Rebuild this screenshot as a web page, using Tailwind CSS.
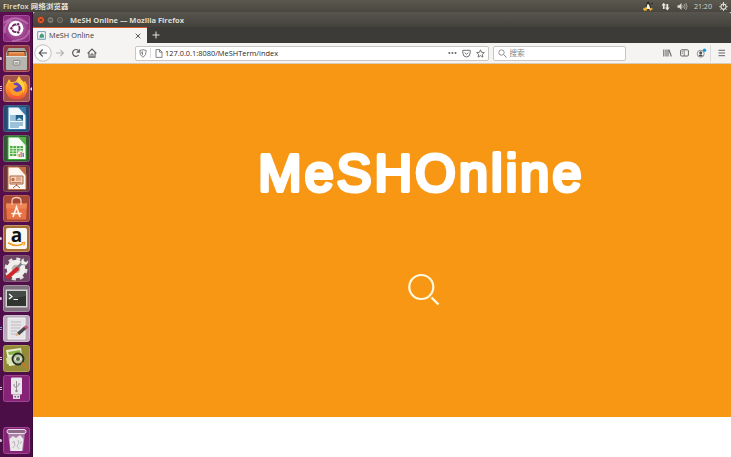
<!DOCTYPE html>
<html lang="zh">
<head>
<meta charset="utf-8">
<title>MeSH Online</title>
<script src="https://cdn.jsdelivr.net/npm/@tailwindcss/browser@4"></script>
</head>
<body class="w-[731px] h-[457px] overflow-hidden flex flex-col font-['Open_Sans','Noto_Sans_CJK_SC',sans-serif] text-[7.5px] leading-none">
<header class="h-3 shrink-0 bg-linear-to-b from-[#5b594f] to-[#48463e] flex items-center justify-between pl-[3px] pr-[3px] text-[#e5e2d9]">
  <svg class="w-[70px] h-[12px]" viewBox="0 0 70 12"><text x="0" y="8.800" font-family="Open Sans, Noto Sans CJK SC, sans-serif" font-weight="600" font-size="7.400" textLength="65.500" fill="#e5e2d9">Firefox 网络浏览器</text></svg>
  <div class="flex items-center">
    <svg class="w-[11px] h-[10px] mr-[7px]" viewBox="0 0 11 10"><path d="M4 1.500Q5.500-.5 6.500 2L8 6 7 9H3L2.500 6Z" fill="#292923"/><path d="M4.500 3 6 3.500 7.300 8H3Z" fill="#f5f2df"/><path d="M0 8 3 6.500 4 9 1.500 9.500ZM6.500 8 8 7l1.500 1L7 9.500Z" fill="#f6b331" stroke="#f6b331" stroke-width=".6"/><path d="m8 3 2-1" stroke="#222"/></svg>
    <svg class="w-[9px] h-[9px] mr-[7px]" viewBox="0 0 9 9" fill="#ece9df"><path d="M.5 3.500 2.700.8 5 3.500H3.600V7H1.900V3.500ZM4 5.500h1.400V2h1.800v3.500h1.400L6.300 8.400Z"/></svg>
    <svg class="w-[11px] h-[9px] mr-[6px]" viewBox="0 0 11 9" fill="none" stroke="#dedbd2"><path d="M.5 3.200h1.700L4.500 1v7L2.200 5.800H.5Z" fill="#dedbd2" stroke="none"/><path d="M5.700 3q1 1.500 0 3M7.200 2q1.800 2.500 0 5M8.800 1q2.400 3.500 0 7" stroke-width=".8" opacity=".75"/></svg>
    <svg class="w-[20px] h-[12px] mr-[5px]" viewBox="0 0 20 12"><text x="0" y="8.800" font-family="Open Sans" font-size="7.200" textLength="18" fill="#d6d3ca">21:20</text></svg>
    <svg class="w-[9px] h-[9px]" viewBox="0 0 9 9" fill="none" stroke="#dedbd2"><circle cx="4.500" cy="4.700" r="2.500" stroke-width="1.200"/><path d="M4.500 0v4.500M4.500 7.500V9M.3 4.700h1.500M7.200 4.700h1.500M1.500 1.700l1 1M6.500 2.700l1-1M1.500 7.700l1-1M6.500 6.700l1 1"/></svg>
  </div>
</header>

<div class="flex flex-1 min-h-0">
  <aside class="w-[33px] shrink-0 bg-linear-to-b from-[#590e50] to-[#4b0e46] pt-[3px] pb-[3px] flex flex-col gap-[3px] border-r border-[#3c0a36]">
    <div class="flex items-center h-[27px]"><span class="w-[3px]"></span>
      <svg class="w-[27px] h-[27px]" viewBox="0 0 27 27"><defs><radialGradient id="p"><stop stop-color="#c987bd"/><stop offset="1" stop-color="#8e2c80"/></radialGradient></defs><rect x=".5" y=".5" width="26" height="26" rx="2" fill="url(#p)" stroke="#a64c98"/><path d="M1 8Q12-2 25 9M26 15Q25 25 9 26M2 18Q0 9 9 5" fill="none" stroke="#d9a6d1" stroke-opacity=".45" stroke-width="2"/><circle cx="12.800" cy="13.300" r="7.600" fill="#fff"/><circle cx="12.800" cy="13.300" r="3.800" fill="none" stroke="#6f2165" stroke-width="1.900"/><g fill="#6f2165" stroke="#fff" stroke-width=".8"><circle cx="8.300" cy="13.300" r="1.700"/><circle cx="15.200" cy="9.200" r="1.700"/><circle cx="15.200" cy="17.400" r="1.700"/></g></svg></div>
    <div class="flex items-center h-[27px]"><span class="w-[3px] flex items-center"><i class="w-[2px] h-[3px] bg-[#d8c7d6] rounded-r-full"></i></span>
      <svg class="w-[27px] h-[27px]" viewBox="0 0 27 27"><rect x=".5" y=".5" width="26" height="26" rx="2" fill="#8d3840" stroke="#b35f67"/><path d="M3 8 5.500 3h16L24 8V13H3Z" fill="#aaa7a2"/><path d="M4.500 6h18v6h-18Z" fill="#553020"/><path d="M5.500 7h16v4h-16Z" fill="#e9a265"/><path d="M5.500 8.500h16V11h-16Z" fill="#d97b3e"/><rect x="3" y="11" width="21" height="14" rx="1" fill="#b7b5b0"/><path d="M3 11.500h21" stroke="#e4e2de"/><rect x="10.300" y="15.500" width="6.500" height="4.500" rx=".7" fill="#e9e8e5" stroke="#77746e" stroke-width=".8"/><path d="M11.500 18h4" stroke="#77746e"/></svg></div>
    <div class="flex items-center h-[27px]"><span class="w-[3px] flex flex-col gap-px"><i class="w-[2px] h-px bg-[#d8c7d6]"></i><i class="w-[2px] h-px bg-[#d8c7d6]"></i><i class="w-[2px] h-px bg-[#d8c7d6]"></i></span>
      <svg class="w-[27px] h-[27px]" viewBox="0 0 27 27"><defs><linearGradient id="f" x2="0" y2="1"><stop stop-color="#ffdb42"/><stop offset=".5" stop-color="#ff9526"/><stop offset="1" stop-color="#f04a38"/></linearGradient></defs><rect x=".5" y=".5" width="26" height="26" rx="2" fill="#a5544a" stroke="#c27a70"/><path d="M4 8 6 4l2 3 3 0 2-1 3-5q2 4 5 6l1-1q3 4 2.500 8Q24 24 13.500 24.500 3 24 2.500 14 2.500 10 4 8Z" fill="url(#f)"/><circle cx="13.500" cy="13.500" r="6" fill="#5b46bd"/><path d="M5 9q4-2 7 1l3 1q-3 3-5 3 2 4 6 2.500 4-1 4-5 2 8-5 9.500Q7 21 6 14Z" fill="#ff9b28"/><path d="M16 2q3 4 5 7 2 5-1 9 0-7-5-10-1-3 1-6Z" fill="#ffd13e"/></svg><i class="border-y-[2px] border-y-transparent border-r-[2px] border-r-[#eee]"></i></div>
    <div class="flex items-center h-[27px]"><span class="w-[3px]"></span>
      <svg class="w-[27px] h-[27px]" viewBox="0 0 27 27"><rect x=".5" y=".5" width="26" height="26" rx="2" fill="#274b70" stroke="#456081"/><path d="M5 2h12l6 7v15.500H5Z" fill="#f4f8fb" stroke="#2674aa"/><path d="M15 2h8v9Z" fill="#3879ad"/><path d="M7 11h5M7 13h5M7 15h5M7 18h13M7 20h13M7 22h9" stroke="#448bb9"/><path d="M12.500 10H20v6h-7.500Z" fill="#235f89"/><path d="m13 15.500 3-3 4 3" fill="#b8d9e7"/></svg></div>
    <div class="flex items-center h-[27px]"><span class="w-[3px]"></span>
      <svg class="w-[27px] h-[27px]" viewBox="0 0 27 27"><rect x=".5" y=".5" width="26" height="26" rx="2" fill="#315a34" stroke="#57765a"/><path d="M5 2h12l6 7v15.500H5Z" fill="#f7fcf5" stroke="#37a936"/><path d="M15 2h8v9Z" fill="#57b647"/><path d="M7 11h13v10H7Z" fill="#51ae46"/><path d="M7 13.500h13M7 16h13M7 18.500h13M10 11v10M13.500 11v10M17 11v10" stroke="#e7f6df" stroke-width=".8"/><circle cx="17.800" cy="19.500" r="3.600" fill="#f3eee4"/><path d="M15.500 22v-3h1.600v3M17.500 22v-5h1.600v5" fill="#db8864"/><path d="M19.500 22v-4H21v4" fill="#628cc0"/></svg></div>
    <div class="flex items-center h-[27px]"><span class="w-[3px]"></span>
      <svg class="w-[27px] h-[27px]" viewBox="0 0 27 27"><rect x=".5" y=".5" width="26" height="26" rx="2" fill="#6c3439" stroke="#80525e"/><path d="M5 2h12l6 7v15.500H5Z" fill="#fff7ef" stroke="#bc6c40"/><path d="M15 2h8v9Z" fill="#c87045"/><path d="M7 11h13v8H7Z" fill="#f4d5bd" stroke="#a86548"/><path d="M13.500 19v2M10 23l3.500-3 3.500 3" stroke="#a86548" fill="none"/><circle cx="10" cy="14.500" r="1.700" fill="#c96f45"/><path d="M13 13h5M13 15h5M8.500 17.500h10" stroke="#c37850" stroke-width=".9"/></svg></div>
    <div class="flex items-center h-[27px]"><span class="w-[3px]"></span>
      <svg class="w-[27px] h-[27px]" viewBox="0 0 27 27"><rect x=".5" y=".5" width="26" height="26" rx="2" fill="#a64834" stroke="#b96455"/><path d="M3 8.500h21l-1 16H4Z" fill="#e97245"/><path d="M3 8.500h21l-.4 5H3.400Z" fill="#f08557"/><path d="M9 10V6q0-3.500 4.500-3.500T18 6v4" fill="none" stroke="#f2c7ae" stroke-width="1.300"/><path d="m10 22 3.500-10L17 22M8.300 18.500h10.400" stroke="#fff1e5" stroke-width="1.700" fill="none"/></svg></div>
    <div class="flex items-center h-[27px]"><span class="w-[3px] flex"><i class="w-[2px] h-[3px] bg-[#d8c7d6] rounded-r-full"></i></span>
      <svg class="w-[27px] h-[27px] overflow-visible" viewBox="0 0 27 27"><rect x=".5" y=".5" width="26" height="26" rx="2" fill="#a66e35" stroke="#c59765"/><rect x="3" y="3" width="21" height="21" rx="2" fill="#faf8f1"/><text x="13.400" y="16.500" text-anchor="middle" font-family="Open Sans" font-size="19" font-weight="700" fill="#111">a</text><path d="M5 17.800q8 5 15.500.8" fill="none" stroke="#f09a24" stroke-width="1.600"/><path d="m18.500 17.500 3.500-.2-1.200 3.500" fill="none" stroke="#f09a24"/></svg></div>
    <div class="flex items-center h-[27px]"><span class="w-[3px]"></span>
      <svg class="w-[27px] h-[27px]" viewBox="0 0 27 27"><rect x=".5" y=".5" width="26" height="26" rx="2" fill="#704564" stroke="#835a78"/><circle cx="13" cy="14" r="10" fill="none" stroke="#e4e3e0" stroke-width="3" stroke-dasharray="4 3.854"/><circle cx="13" cy="14" r="6.800" fill="#b7b4b4" stroke="#f1efec" stroke-width="5"/><path d="m13 14 6-6" stroke="#85818a" stroke-width="2.500"/><path d="M18 9V5l3-2v3l2 1 2-2q1 5-4 5Z" fill="#f1f1ee" stroke="#77717a" stroke-width=".6"/><path d="m5 22 9-8" stroke="#cd272b" stroke-width="4" stroke-linecap="round"/></svg></div>
    <div class="flex items-center h-[27px]"><span class="w-[3px] flex"><i class="w-[2px] h-[3px] bg-[#d8c7d6] rounded-r-full"></i></span>
      <svg class="w-[27px] h-[27px]" viewBox="0 0 27 27"><rect x=".5" y=".5" width="26" height="26" rx="2" fill="#81717e" stroke="#a494a1"/><rect x="2.500" y="4.500" width="22" height="18" fill="#d3d2cf"/><rect x="4" y="6" width="19" height="15" fill="#303532"/><path d="M4 6h19v5L4 15Z" fill="#464b48"/><path d="m6 9 3 2.500L6 14M10.500 14.500H15" fill="none" stroke="#fff" stroke-width="1.200"/></svg></div>
    <div class="flex items-center h-[27px]"><span class="w-[3px] flex flex-col gap-px"><i class="w-[2px] h-px bg-[#75a9db]"></i><i class="w-[2px] h-px bg-[#75a9db]"></i></span>
      <svg class="w-[27px] h-[27px]" viewBox="0 0 27 27"><rect x=".5" y=".5" width="26" height="26" rx="2" fill="#b9aab9" stroke="#cfc2cf"/><path d="M5 3h17v21H5Z" fill="#e6e4e6" stroke="#f4f1f4"/><path d="M8 7h10M8 10h10M8 13h9M8 16h6M8 19h5" stroke="#b8b5b9" stroke-width=".9"/><path d="m15 19 7.500-6.500" stroke="#46464c" stroke-width="3.200"/><path d="m21 12 2.500 2.500 2-2-2.500-2.500Z" fill="#cf597d"/><path d="m12.500 21 1.500-3.500 2.200 2.500Z" fill="#d7ad70"/></svg></div>
    <div class="flex items-center h-[27px]"><span class="w-[3px] flex flex-col gap-px"><i class="w-[2px] h-px bg-[#d8c7d6]"></i><i class="w-[2px] h-px bg-[#d8c7d6]"></i></span>
      <svg class="w-[27px] h-[27px]" viewBox="0 0 27 27"><rect x=".5" y=".5" width="26" height="26" rx="2" fill="#938b37" stroke="#aaa257"/><path d="m3 5 15-2 2 16-14 2Z" fill="#e8edce"/><path d="m5 7 12-2 1 4-12 1Z" fill="#88b344"/><path d="m3 13 15-4 1 9-15 1Z" fill="#d7e5aa"/><circle cx="15" cy="14" r="5.500" fill="#b9c4a0" stroke="#292c26" stroke-width="1.800"/><path d="M11 14q4-4 8 0-4 4-8 0Z" fill="#eef0df"/><circle cx="15" cy="14" r="2" fill="#51654a"/><path d="m19.500 18.500 4 4" stroke="#c7772e" stroke-width="2.200" stroke-linecap="round"/></svg></div>
    <div class="flex items-center h-[27px]"><span class="w-[3px] flex flex-col gap-px"><i class="w-[2px] h-px bg-[#d8c7d6]"></i><i class="w-[2px] h-px bg-[#d8c7d6]"></i></span>
      <svg class="w-[27px] h-[27px]" viewBox="0 0 27 27"><rect x=".5" y=".5" width="26" height="26" rx="2" fill="#862377" stroke="#a04592"/><rect x="8" y="2.500" width="11" height="17" rx="1" fill="#e9e6e9"/><path d="M10 19.500h7v4.500h-7Z" fill="#dedadd"/><path d="M11.500 21h1.500v1.500h-1.500M14.500 21h1.500v1.500h-1.500" fill="#71636f"/><path d="M13.500 16V6M11 9v2l2.500 2M16 8v2l-2.500 2" fill="none" stroke="#8e8790" stroke-width=".9"/><circle cx="13.500" cy="16" r="1.200" fill="#8e8790"/></svg></div>
    <div class="flex items-center h-[27px] mt-auto"><span class="w-[3px] flex"><i class="w-[2px] h-[3px] bg-[#d8c7d6] rounded-r-full"></i></span>
      <svg class="w-[27px] h-[27px]" viewBox="0 0 27 27"><rect x=".5" y=".5" width="26" height="26" rx="2" fill="#862377" stroke="#a04592"/><path d="M5 5h17l-2 19H7Z" fill="#ad80a8"/><path d="m6.500 12 3.500-3 3 2 4-3 3.500 4-1.500 12H7.500Z" fill="#eae8ea"/><path d="m9 16 2-2 1 4-2 3M15 13l1 3-2 3 2 3M18.500 14l-1 3" fill="none" stroke="#b3a6b2" stroke-width=".8"/><rect x="4" y="2.500" width="19" height="4" rx="2" fill="#92698c" stroke="#e8e4e8"/></svg></div>
  </aside>

  <main class="flex-1 min-w-0 flex flex-col bg-white">
    <div class="h-[15px] shrink-0 bg-linear-to-b from-[#57554d] to-[#43423c] rounded-t-[2px] flex items-center pl-[3px]">
      <svg class="w-[30px] h-[10px] mr-[4px]" viewBox="0 0 30 10" fill="none"><circle cx="4.800" cy="5" r="3.700" fill="#e8592c" stroke="#34332e" stroke-width=".6"/><path d="m3.300 3.500 3 3m0-3-3 3" stroke="#64301d"/><g fill="#7c7a71" stroke="#34332e" stroke-width=".6"><circle cx="14.500" cy="5" r="3.500"/><circle cx="24" cy="5" r="3.500"/></g><path d="M12.800 5h3.400M22.800 3.800h2.400v2.400h-2.400Z" stroke="#3c3b36" stroke-width=".9"/></svg>
      <svg class="w-[120px] h-[12px]" viewBox="0 0 120 12"><text x="0" y="8.500" font-family="Open Sans" font-weight="700" font-size="7.500" textLength="114" fill="#dfdbd2">MeSH Online — Mozilla Firefox</text></svg>
    </div>
    <div class="h-4 shrink-0 bg-[#3c3b37] flex">
      <div class="w-[113.500px] bg-[#f5f4f3] border-t border-[#d85a28] flex items-center pl-[4px] pr-[5px]">
        <svg class="w-[9px] h-[9px] mr-[3px]" viewBox="0 0 9 9"><path d="M.7.700h7.600v7.600H.7Z" fill="#fff" stroke="#6a9eae"/><path d="M2 6.700h5M3 4l2-1.500L6.500 4v2H3Z" stroke="#388c65" fill="#49a077" stroke-width=".6"/></svg>
        <svg class="w-[50px] h-[12px]" viewBox="0 0 50 12"><text x="0" y="8.300" font-family="Open Sans" font-size="7.300" textLength="45" fill="#383838">MeSH Online</text></svg>
        <svg class="w-[6px] h-[6px] ml-auto mr-px" viewBox="0 0 6 6"><path d="m.7.700 4.600 4.600m0-4.600L.7 5.300" stroke="#484848" stroke-width=".9"/></svg>
      </div>
      <svg class="w-[8px] h-[8px] ml-[5px] mt-[4px]" viewBox="0 0 8 8"><path d="M4 .5v7M.5 4h7" stroke="#e7e4dd"/></svg>
    </div>
    <div class="h-[21px] shrink-0 bg-[#f5f4f3] border-b border-[#d8cbb8] flex items-center">
      <svg class="w-[18px] h-[18px] ml-px" viewBox="0 0 18 18" fill="none"><circle cx="9" cy="9" r="8.200" fill="#fcfcfc" stroke="#b3b2b0" stroke-width=".8"/><path d="M13 9H5.500M8.700 5.500 5.200 9l3.500 3.500" stroke="#555" stroke-width="1.100"/></svg>
      <svg class="w-[10px] h-[10px] ml-[3px]" viewBox="0 0 10 10"><path d="M1 5h7.500M5.300 1.800 8.500 5 5.300 8.200" fill="none" stroke="#b3b2b1" stroke-width="1.100"/></svg>
      <svg class="w-[10px] h-[10px] ml-[6px]" viewBox="0 0 10 10"><path d="M7.700 7A3.400 3.400 0 1 1 7.500 2.600" fill="none" stroke="#5c5c5c" stroke-width="1.200"/><path d="M8.900.8v4H5Z" fill="#5c5c5c"/></svg>
      <svg class="w-[10px] h-[10px] ml-[6px]" viewBox="0 0 10 10" fill="none" stroke="#5c5c5c"><path d="m.6 5.300 4.400-4.200 4.400 4.200M2 4.800v4.300h6V4.800" stroke-width="1.100"/><path d="M4 9V6h2v3"/></svg>
      <div class="w-[354px] h-[15px] ml-[38px] bg-white border border-[#c8c6c3] rounded-[2px] flex items-center">
        <svg class="w-[8px] h-[9px] ml-[3px]" viewBox="0 0 8 9"><path d="M4 .7 7.200 1.500Q7.500 6.500 4 8.300.5 6.500.8 1.500Z" fill="none" stroke="#777" stroke-width=".9"/><path d="M4 2.300 2.300 2.700Q2.300 5.300 4 6.700Z" fill="#888"/></svg>
        <i class="w-px h-[10px] bg-[#ddd] ml-[3px] mr-[4px]"></i>
        <svg class="w-[8px] h-[9px]" viewBox="0 0 8 9"><path d="M1 .6h3.700L7 3v5.400H1ZM4.500.6v2.600H7" fill="none" stroke="#777" stroke-width=".9"/></svg>
        <svg class="w-[120px] h-[12px] ml-[2px]" viewBox="0 0 120 12"><text x="0" y="8.700" font-family="Open Sans" font-size="7.400" textLength="113" fill="#292929">127.0.0.1:8080/MeSHTerm/index</text></svg>
        <div class="ml-auto mr-[3px] flex items-center gap-[5px]">
          <svg class="w-[9px] h-[4px]" viewBox="0 0 9 4" fill="#666"><circle cx="1.300" cy="2" r="1"/><circle cx="4.400" cy="2" r="1"/><circle cx="7.500" cy="2" r="1"/></svg>
          <svg class="w-[9px] h-[9px]" viewBox="0 0 9 9" fill="none" stroke="#737373"><path d="M.8 1.300h7.400V4Q7.800 8 4.500 8T.8 4Z"/><path d="m2.700 3.700 1.800 1.600 1.800-1.600"/></svg>
          <svg class="w-[9px] h-[9px]" viewBox="0 0 9 9"><path d="m4.500.8 1.100 2.500 2.700.3-2 1.800.6 2.700-2.400-1.400-2.400 1.400.6-2.700-2-1.800 2.700-.3Z" fill="none" stroke="#666" stroke-width=".9"/></svg>
        </div>
      </div>
      <div class="w-[133px] h-[15px] ml-[4px] bg-white border border-[#c8c6c3] rounded-[2px] flex items-center pl-[4px] gap-[3px]">
        <svg class="w-[9px] h-[9px]" viewBox="0 0 9 9"><path d="m5.500 5.500 3 3" stroke="#888"/><circle cx="3.500" cy="3.500" r="2.700" fill="none" stroke="#888" stroke-width=".9"/></svg>
        <svg class="w-[20px] h-[12px]" viewBox="0 0 20 12"><text x="-.7" y="9" font-family="Noto Sans CJK SC, sans-serif" font-size="7.700" fill="#858585">搜索</text></svg>
      </div>
      <div class="ml-auto mr-[5px] flex items-center">
        <svg class="w-[9px] h-[8px] mr-[8px]" viewBox="0 0 9 8"><path d="M.8.500v7M3 .5v7M5 .5v7M6 .8l2.300 6.700" stroke="#666" stroke-width="1.100"/></svg>
        <svg class="w-[9px] h-[8px] mr-[7px]" viewBox="0 0 9 8"><rect x=".6" y=".8" width="7.800" height="6.200" rx="1" fill="none" stroke="#666"/><path d="M4.200 1v6M1.800 2.700H3M1.800 4.200H3" stroke="#666" stroke-width=".8"/></svg>
        <svg class="w-[11px] h-[11px] mr-[3px]" viewBox="0 0 11 11"><circle cx="4.700" cy="5.700" r="3.500" fill="none" stroke="#888" stroke-width=".9"/><circle cx="4.700" cy="4.700" r="1.500" fill="#505050"/><path d="M2.500 7.700q2.200-2.500 4.400 0-2.200 1.600-4.400 0" fill="#505050"/><circle cx="8.500" cy="2.200" r="1.700" fill="#1599de"/></svg>
        <i class="w-px h-[17px] bg-[#dddcda] mr-[7px]"></i>
        <svg class="w-[8px] h-[8px]" viewBox="0 0 8 8"><path d="M.5 1.300h6.500M.5 4h6.500M.5 6.700h6.500" stroke="#666"/></svg>
      </div>
    </div>
    <section class="h-[353px] shrink-0 bg-[#f79714] flex flex-col items-start pt-[80px]">
      <svg class="w-[340px] h-[60px] ml-[217px] overflow-visible" viewBox="0 0 340 60" role="heading"><text x="8.300" y="46.500" font-family="Liberation Sans" font-size="52" textLength="323" fill="#fff" stroke="#fff" stroke-width="4" stroke-linejoin="round" stroke-linecap="round">MeSHOnline</text></svg>
      <svg class="w-[34px] h-[34px] mt-[68px] ml-[374px]" viewBox="0 0 34 34" fill="none" stroke="#fff9df"><circle cx="14.300" cy="15" r="12" stroke-width="2.200"/><path d="m24.500 25.500 7 7" stroke-width="2.400"/></svg>
    </section>
  </main>
</div>
</body>
</html>
